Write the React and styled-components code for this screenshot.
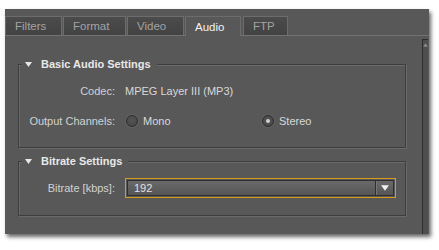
import React from "react";
import styled, { createGlobalStyle } from "styled-components";

const Global = createGlobalStyle`
  html, body { margin: 0; padding: 0; background: #ffffff; }
  body { font-family: "Liberation Sans", Arial, sans-serif; font-size: 11px; }
`;

const Page = styled.div`
  padding: 9px 0 0 5px;
  width: 439px;
  height: 250px;
  box-sizing: border-box;
`;

const Panel = styled.div`
  width: 424px;
  height: 225px;
  background: #585858;
  box-shadow: 2px 3px 4px rgba(0, 0, 0, 0.6);
  display: flex;
  flex-direction: column;
  padding-top: 7px;
  box-sizing: border-box;
`;

const TabBar = styled.div`
  display: flex;
  gap: 1px;
  height: 19px;
  border-bottom: 1px solid #727272;
`;

const Tab = styled.div`
  box-sizing: border-box;
  width: ${(p) => p.$w}px;
  height: ${(p) => (p.$active ? 20 : 19)}px;
  padding-left: 9px;
  display: flex;
  align-items: center;
  border: 1px solid #6c6c6c;
  border-bottom: none;
  margin-left: ${(p) => p.$ml || 0}px;
  background: ${(p) =>
    p.$active ? "#585858" : "linear-gradient(#4b4b4b, #434343)"};
  color: ${(p) => (p.$active ? "#f2f2f2" : "#a3a3a3")};
  font-size: 11.5px;
  position: relative;
  z-index: ${(p) => (p.$active ? 1 : 0)};
`;

const Body = styled.div`
  flex: 1;
  display: flex;
`;

const Content = styled.div`
  flex: 1;
  padding: 28px 16px 0 13px;
`;

const ScrollTrack = styled.div`
  width: 7px;
  margin-top: 3px;
  margin-right: 1px;
  background: #4e4e4e;
  border-left: 1px solid #2c2c2c;
  border-top: 1px solid #2c2c2c;
  display: flex;
  justify-content: center;
  padding-top: 3px;
  box-sizing: border-box;
`;

const Group = styled.div`
  border: 1px solid #3e3e3e;
  box-shadow: 1px 1px 0 #6a6a6a, inset 1px 1px 0 #6a6a6a;
  padding: 0 0 ${(p) => p.$pb}px 8px;
  margin-bottom: ${(p) => p.$mb || 0}px;
`;

const Legend = styled.div`
  display: flex;
  align-items: center;
  gap: 9px;
  height: 14px;
  margin: -8px 0 0 -5px;
  padding: 0 6px 0 3px;
  width: fit-content;
  background: #585858;
  color: #e8e8e8;
  font-weight: bold;
  font-size: 11px;
`;

const Rows = styled.div`
  display: grid;
  grid-template-columns: 88px 1fr;
  column-gap: 10px;
  row-gap: 10px;
  margin-top: ${(p) => p.$mt}px;
  padding-right: 9px;
`;

const Label = styled.div`
  text-align: right;
  color: #d2d2d2;
  height: 20px;
  line-height: 20px;
`;

const Value = styled.div`
  color: #d8d8d8;
  height: 20px;
  display: flex;
  align-items: center;
`;

const RadioOption = styled.label`
  display: flex;
  align-items: center;
  gap: 5px;
  width: ${(p) => p.$w}px;
  margin-left: 1px;
  color: #d8d8d8;
`;

const RadioCircle = styled.span`
  width: 12px;
  height: 12px;
  box-sizing: border-box;
  border-radius: 50%;
  border: 1px solid #2e2e2e;
  background: radial-gradient(circle at 50% 40%, #555 0%, #494949 70%);
  box-shadow: 0 0 0 1px rgba(110, 110, 110, 0.5);
  display: flex;
  align-items: center;
  justify-content: center;
  &::after {
    content: "";
    width: 4px;
    height: 4px;
    border-radius: 50%;
    background: ${(p) => (p.$checked ? "#d0d0d0" : "transparent")};
  }
`;

const Select = styled.div`
  width: 271px;
  height: 20px;
  box-sizing: border-box;
  border: 1px solid #d99a16;
  padding: 1px;
  display: flex;
`;

const SelectInner = styled.div`
  flex: 1;
  display: flex;
  border: 1px solid #2f2f2f;
  background: linear-gradient(#6a6a6a, #5f5f5f 50%, #555555);
`;

const SelectText = styled.div`
  flex: 1;
  color: #e2e2e2;
  padding-left: 6px;
  display: flex;
  align-items: center;
`;

const SelectButton = styled.div`
  width: 17px;
  border-left: 1px solid #2f2f2f;
  box-shadow: inset 1px 0 0 #777;
  display: flex;
  align-items: center;
  justify-content: center;
`;

const Tri = ({ size = 7, color = "#e8e8e8", up }) => (
  <svg width={size} height={Math.ceil(size * 0.7)} viewBox="0 0 10 7">
    <path d={up ? "M0 7 L5 0 L10 7 Z" : "M0 0 L10 0 L5 7 Z"} fill={color} />
  </svg>
);

const tabs = [
  { name: "Filters", w: 57 },
  { name: "Format", w: 63 },
  { name: "Video", w: 57 },
  { name: "Audio", w: 56, active: true },
  { name: "FTP", w: 45, ml: 1 },
];

export default function App() {
  return (
    <Page>
      <Global />
      <Panel>
        <TabBar>
          {tabs.map((t) => (
            <Tab key={t.name} $w={t.w} $active={t.active} $ml={t.ml}>
              {t.name}
            </Tab>
          ))}
        </TabBar>
        <Body>
          <Content>
            <Group $pb={16} $mb={13}>
              <Legend>
                <Tri />
                <span>Basic Audio Settings</span>
              </Legend>
              <Rows $mt={10}>
                <Label>Codec:</Label>
                <Value>MPEG Layer III (MP3)</Value>
                <Label>Output Channels:</Label>
                <Value>
                  <RadioOption $w={135}>
                    <RadioCircle />
                    Mono
                  </RadioOption>
                  <RadioOption>
                    <RadioCircle $checked />
                    Stereo
                  </RadioOption>
                </Value>
              </Rows>
            </Group>
            <Group $pb={17}>
              <Legend>
                <Tri />
                <span>Bitrate Settings</span>
              </Legend>
              <Rows $mt={10}>
                <Label>Bitrate [kbps]:</Label>
                <Value>
                  <Select>
                    <SelectInner>
                      <SelectText>192</SelectText>
                      <SelectButton>
                        <Tri size={8} color="#f0f0f0" />
                      </SelectButton>
                    </SelectInner>
                  </Select>
                </Value>
              </Rows>
            </Group>
          </Content>
          <ScrollTrack>
            <Tri size={5} color="#8a8a8a" up />
          </ScrollTrack>
        </Body>
      </Panel>
    </Page>
  );
}
